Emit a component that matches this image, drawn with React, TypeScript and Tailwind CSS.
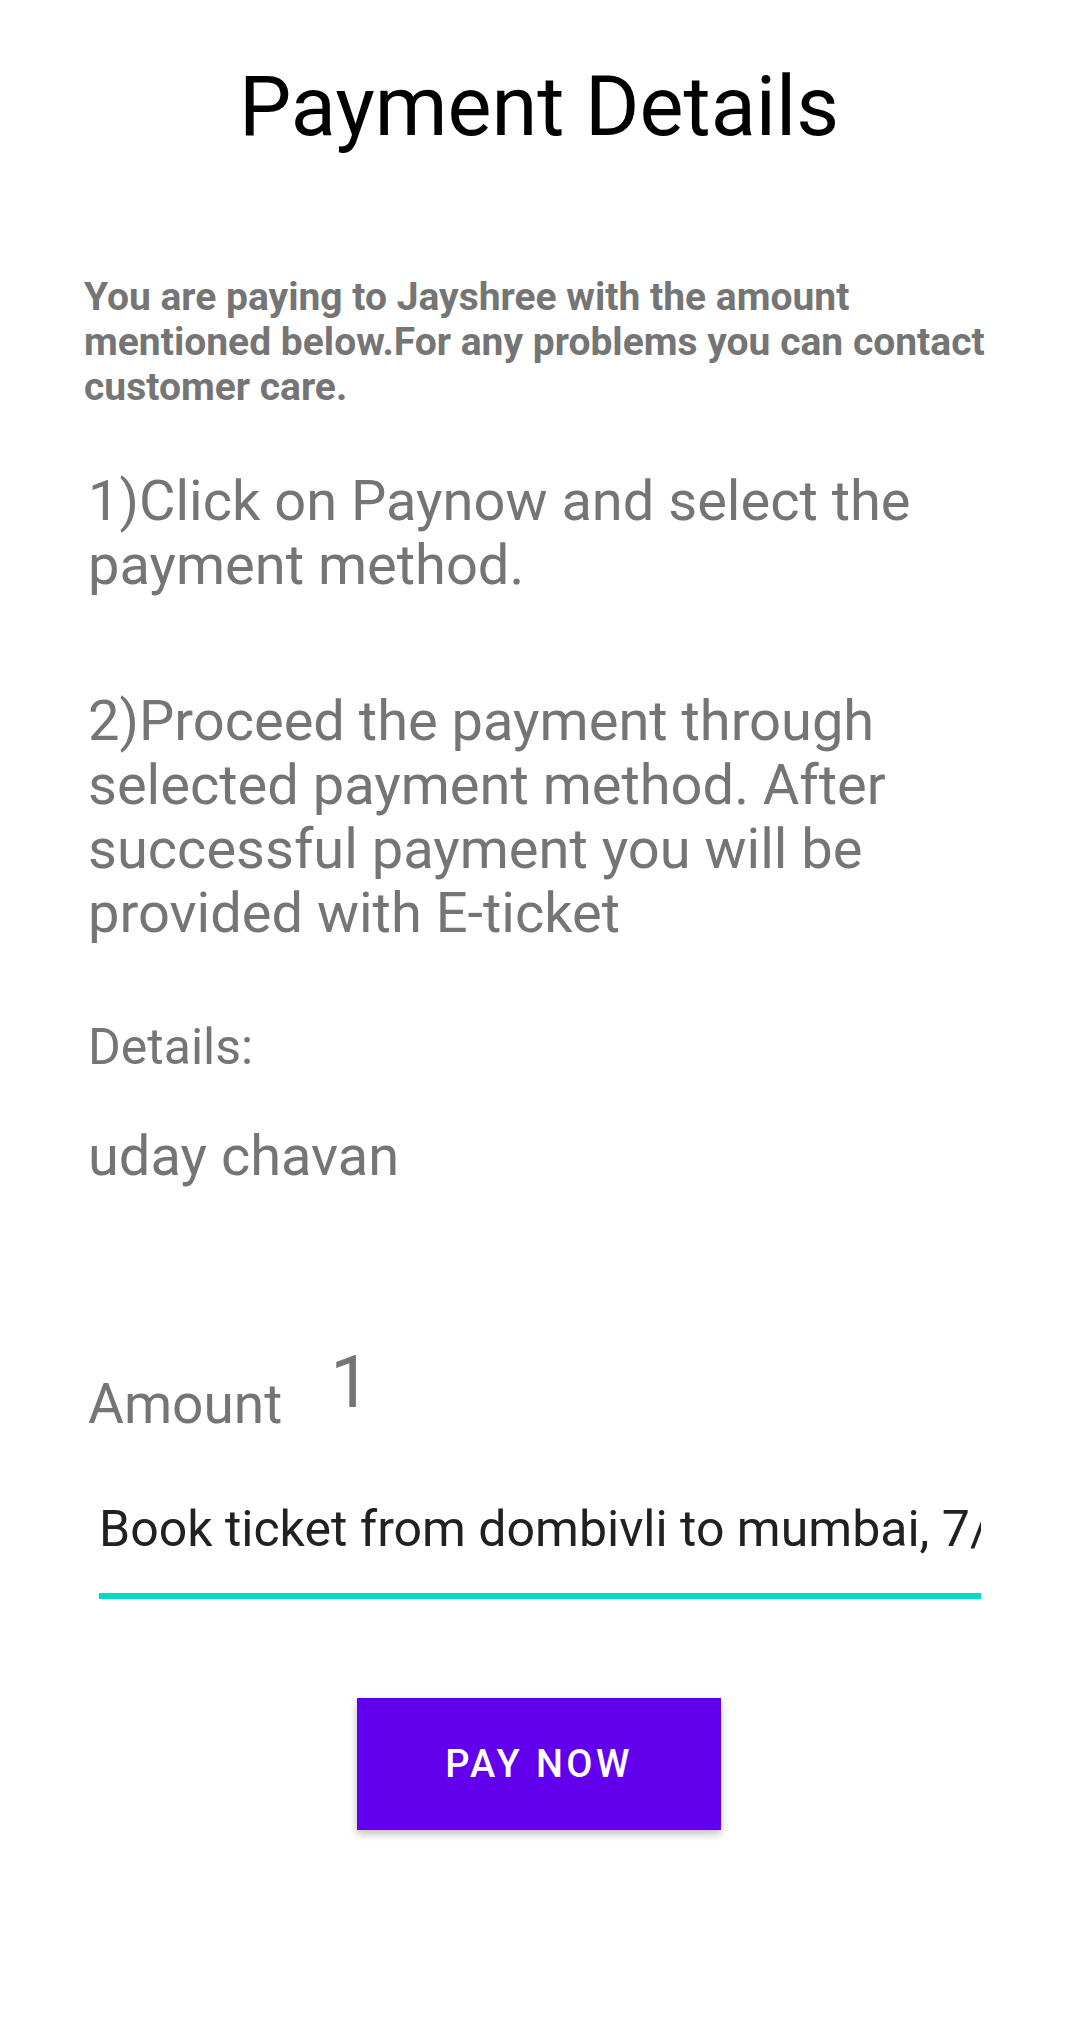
import React from 'react';

// ── Payment details screen ──
const steps = [
  ['1)Click on Paynow and select the', 'payment method.'],
  [
    '2)Proceed the payment through',
    'selected payment method. After',
    'successful payment you will be',
    'provided with E-ticket',
  ],
];

export default function App() {
  return (
    <div className="w-full min-h-[2023px] bg-white font-['Roboto',sans-serif] text-[#757575]">
      {/* Title */}
      <h1 className="pt-[59px] text-center text-[83px] leading-[96px] font-normal text-black">
        Payment Details
      </h1>

      {/* Info */}
      <p className="mt-[120px] pl-[84px] text-[39px] leading-[45px] font-bold whitespace-nowrap">
        You are paying to Jayshree with the amount
        <br />
        mentioned below.For any problems you can contact
        <br />
        customer care.
      </p>

      {/* Steps */}
      <p className="mt-[59px] pl-[88px] text-[56px] leading-[64px] whitespace-nowrap">
        {steps[0].map((line, i) => (
          <span key={i} className="block">{line}</span>
        ))}
      </p>
      <p className="mt-[92px] pl-[88px] text-[56px] leading-[64px] whitespace-nowrap">
        {steps[1].map((line, i) => (
          <span key={i} className="block">{line}</span>
        ))}
      </p>

      {/* Details */}
      <p className="mt-[74px] pl-[88px] text-[50px] leading-[56px]">Details:</p>
      <p className="mt-[49px] pl-[88px] text-[56px] leading-[64px]">uday chavan</p>

      {/* Amount */}
      <div className="mt-[154px] pl-[88px] flex items-start gap-[48px]">
        <span className="mt-[30px] text-[55px] leading-[64px]">Amount</span>
        <span className="text-[72px] leading-[81px]">1</span>
      </div>

      {/* Description field */}
      <div className="mt-[65px] ml-[99px] w-[882px] pb-[36px] border-b-[6px] border-[#03dac5] overflow-hidden">
        <div className="text-[50px] leading-[56px] text-[#212121] whitespace-nowrap">
          Book ticket from dombivli to mumbai, 7/10/2021
        </div>
      </div>

      {/* Pay button */}
      <div className="mt-[99px] flex justify-center">
        <button className="w-[364px] h-[132px] bg-[#6200ee] text-white text-[38px] font-medium tracking-[0.09em] shadow-[0_4px_8px_rgba(0,0,0,0.25)] flex items-center justify-center">
          PAY NOW
        </button>
      </div>
    </div>
  );
}
